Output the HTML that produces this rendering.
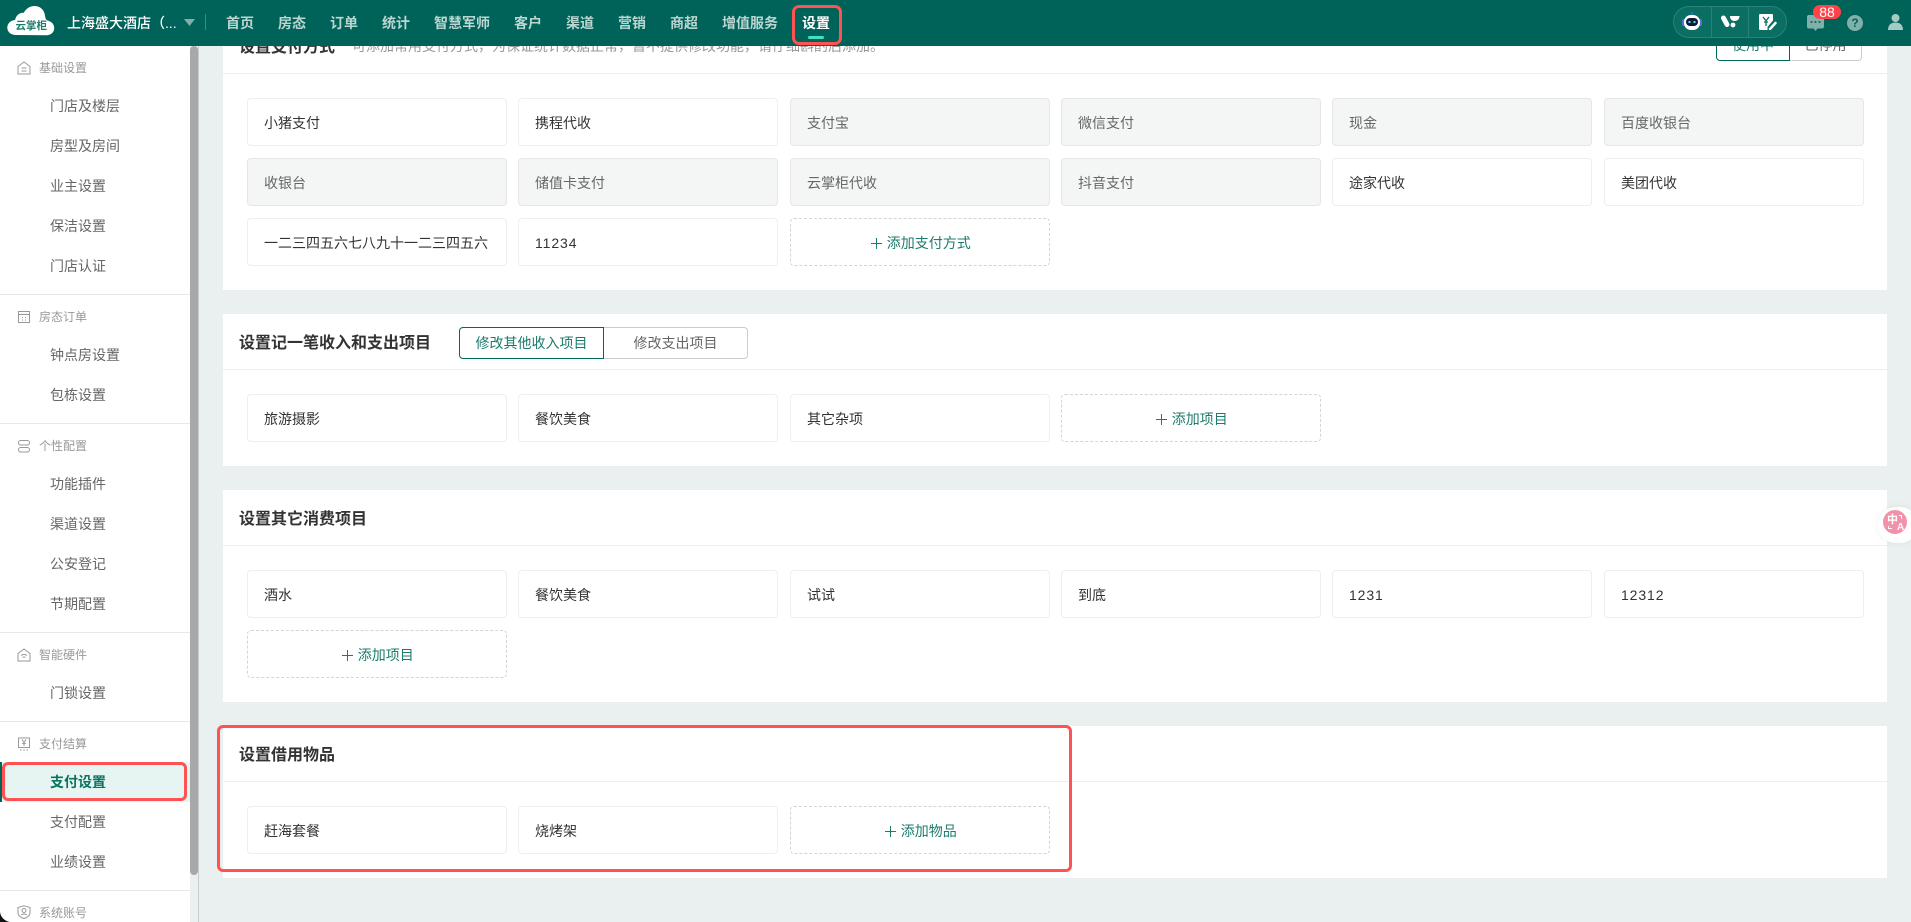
<!DOCTYPE html>
<html lang="zh-CN"><head><meta charset="utf-8"><title>设置</title>
<style>
*{box-sizing:border-box;margin:0;padding:0}
html,body{width:1911px;height:922px;overflow:hidden;background:#eaf0f0;font-family:"Liberation Sans","Noto Sans CJK SC",sans-serif;color:#333}
.a{position:absolute;white-space:nowrap}
#hd{left:0;top:0;width:1911px;height:46px;background:#00635a;z-index:5}
.n{top:12px;height:22px;line-height:22px;font-size:14px;font-weight:700;color:#bcd6d1}
.sb{left:0;top:46px;width:190px;height:876px;background:#fff}
.g{left:39px;font-size:12px;line-height:16px;color:#999;margin-top:1px}
.m{left:50px;font-size:14px;line-height:20px;color:#666}
.dv{left:0;width:190px;height:1px;background:#e8e8e8}
.ic{left:17px;width:14px;height:14px;fill:none;stroke:#999;stroke-width:1}
.c{left:223px;width:1664px;background:#fff}
.l{left:223px;width:1664px;height:1px;background:#eee}
.t{left:239px;font-size:16px;font-weight:700;line-height:24px;color:#333}
.i{width:259.5px;height:48px;border:1px solid #eee;border-radius:4px;background:#fff;font-size:14px;line-height:48px;padding-left:16px;color:#333}
.d{background:#f4f5f5;border-color:#e6e6e6;color:#666}
.ad{border:1px dashed #d4d4d4;color:#1c7b6c;text-align:center;padding:0 0 0 2px}
.ad b{display:inline-block;position:relative;width:11px;height:11px;margin-right:5px;vertical-align:-1px}
.ad b:before{content:"";position:absolute;left:0;top:5px;width:11px;height:1px;background:#1c7b6c}
.ad b:after{content:"";position:absolute;left:5px;top:0;width:1px;height:11px;background:#1c7b6c}
.tab{height:32px;font-size:14px;line-height:30px;text-align:center;color:#666;border:1px solid #ccc}
.on{border-color:#00695c;color:#1c7b6c;border-radius:4px 0 0 4px;background:#fff}
.off{border-left:none;border-radius:0 4px 4px 0;background:#fff}
.r{border:3px solid #ff5252;border-radius:6px;z-index:6;pointer-events:none}
</style></head><body>

<div class="a" style="left:0;top:0;width:1911px;height:922px;background:#eaf0f0"></div>

<!-- cards -->
<div class="a c" style="top:18px;height:272px"></div>
<div class="a l" style="top:73px"></div>
<div class="a t" style="top:36px">设置支付方式</div>
<div class="a" style="left:352px;top:36px;font-size:14px;line-height:20px;color:#999">可添加常用支付方式，为保证统计数据正常，暂不提供修改功能，请仔细斟酌后添加。</div>
<div class="a tab on" style="left:1716px;top:29px;width:74px">使用中</div>
<div class="a tab off" style="left:1790px;top:29px;width:72px">已停用</div>

<div class="a i" style="left:247px;top:98px">小猪支付</div>
<div class="a i" style="left:518px;top:98px">携程代收</div>
<div class="a i d" style="left:790px;top:98px">支付宝</div>
<div class="a i d" style="left:1061px;top:98px">微信支付</div>
<div class="a i d" style="left:1332px;top:98px">现金</div>
<div class="a i d" style="left:1604px;top:98px">百度收银台</div>
<div class="a i d" style="left:247px;top:158px">收银台</div>
<div class="a i d" style="left:518px;top:158px">储值卡支付</div>
<div class="a i d" style="left:790px;top:158px">云掌柜代收</div>
<div class="a i d" style="left:1061px;top:158px">抖音支付</div>
<div class="a i" style="left:1332px;top:158px">途家代收</div>
<div class="a i" style="left:1604px;top:158px">美团代收</div>
<div class="a i" style="left:247px;top:218px">一二三四五六七八九十一二三四五六</div>
<div class="a i" style="left:518px;top:218px;letter-spacing:.9px">11234</div>
<div class="a i ad" style="left:790px;top:218px"><b></b>添加支付方式</div>

<div class="a c" style="top:314px;height:152px"></div>
<div class="a l" style="top:369px"></div>
<div class="a t" style="top:332px">设置记一笔收入和支出项目</div>
<div class="a tab on" style="left:459px;top:327px;width:145px">修改其他收入项目</div>
<div class="a tab off" style="left:604px;top:327px;width:144px">修改支出项目</div>
<div class="a i" style="left:247px;top:394px">旅游摄影</div>
<div class="a i" style="left:518px;top:394px">餐饮美食</div>
<div class="a i" style="left:790px;top:394px">其它杂项</div>
<div class="a i ad" style="left:1061px;top:394px"><b></b>添加项目</div>

<div class="a c" style="top:490px;height:212px"></div>
<div class="a l" style="top:545px"></div>
<div class="a t" style="top:508px">设置其它消费项目</div>
<div class="a i" style="left:247px;top:570px">酒水</div>
<div class="a i" style="left:518px;top:570px">餐饮美食</div>
<div class="a i" style="left:790px;top:570px">试试</div>
<div class="a i" style="left:1061px;top:570px">到底</div>
<div class="a i" style="left:1332px;top:570px;letter-spacing:.9px">1231</div>
<div class="a i" style="left:1604px;top:570px;letter-spacing:.9px">12312</div>
<div class="a i ad" style="left:247px;top:630px"><b></b>添加项目</div>

<div class="a c" style="top:726px;height:152px"></div>
<div class="a l" style="top:781px"></div>
<div class="a t" style="top:744px">设置借用物品</div>
<div class="a i" style="left:247px;top:806px">赶海套餐</div>
<div class="a i" style="left:518px;top:806px">烧烤架</div>
<div class="a i ad" style="left:790px;top:806px"><b></b>添加物品</div>
<div class="a r" style="left:217px;top:725px;width:855px;height:147px"></div>

<!-- translate widget -->
<div class="a" style="left:1878px;top:507px;width:40px;height:36px;border-radius:18px;background:#fff;box-shadow:0 0 8px rgba(0,0,0,.06)"></div>
<div class="a" style="left:1883px;top:510px;width:24px;height:24px;border-radius:50%;background:#f292aa;color:#fff;font-size:11px;line-height:12px;font-weight:700"><span class="a" style="left:4px;top:4px">中</span><span class="a" style="left:14px;top:12px;font-size:10px">A</span><svg class="a" style="left:0;top:0" width="24" height="24" viewBox="0 0 24 24" fill="none" stroke="#fff" stroke-width="1"><path d="M16 5.500h2.500V9M5.500 16v2.500H9"/></svg></div>

<!-- sidebar -->
<div class="a sb"></div>
<div class="a" style="left:198px;top:46px;width:1px;height:876px;background:#c9cccc"></div>
<div class="a" style="left:190px;top:46px;width:8px;height:829px;background:#a8a8a8;border-radius:4px"></div>

<svg class="a ic" style="top:61px" viewBox="0 0 14 14"><path d="M1 5.500 7 1l6 4.500V13H1zM4.500 7h5M4.500 10h5"/></svg>
<div class="a g" style="top:59px">基础设置</div>
<div class="a m" style="top:96px">门店及楼层</div>
<div class="a m" style="top:136px">房型及房间</div>
<div class="a m" style="top:176px">业主设置</div>
<div class="a m" style="top:216px">保洁设置</div>
<div class="a m" style="top:256px">门店认证</div>
<div class="a dv" style="top:294px"></div>

<svg class="a ic" style="top:310px" viewBox="0 0 14 14"><path d="M1.500 1.500h11v11h-11zM1.500 4.500h11M5 7.500h1M8 7.500h1M5 10h1M8 10h1"/></svg>
<div class="a g" style="top:308px">房态订单</div>
<div class="a m" style="top:345px">钟点房设置</div>
<div class="a m" style="top:385px">包栋设置</div>
<div class="a dv" style="top:423px"></div>

<svg class="a ic" style="top:439px" viewBox="0 0 14 14"><rect x="1.500" y="1.500" width="11" height="4.500" rx="2.200"/><rect x="1.500" y="8.500" width="11" height="4.500" rx="2.200"/></svg>
<div class="a g" style="top:437px">个性配置</div>
<div class="a m" style="top:474px">功能插件</div>
<div class="a m" style="top:514px">渠道设置</div>
<div class="a m" style="top:554px">公安登记</div>
<div class="a m" style="top:594px">节期配置</div>
<div class="a dv" style="top:632px"></div>

<svg class="a ic" style="top:648px" viewBox="0 0 14 14"><path d="M1 5.500 7 1l6 4.500V13H1zM4 7.500c2-1.500 4-1.500 6 0M5.500 9.500c1-.7 2-.7 3 0"/></svg>
<div class="a g" style="top:646px">智能硬件</div>
<div class="a m" style="top:683px">门锁设置</div>
<div class="a dv" style="top:721px"></div>

<svg class="a ic" style="top:737px" viewBox="0 0 14 14"><path d="M1.500 1h11v9.500h-11zM3 13h1.500M6.300 13h1.500M9.500 13H11M5 2.500 7 5.500l2-3M7 5.500V9M5.200 6.500h3.600"/></svg>
<div class="a g" style="top:735px">支付结算</div>
<div class="a" style="left:0;top:762px;width:190px;height:40px;background:#e6f5f1"></div>
<div class="a" style="left:0;top:762px;width:2px;height:40px;background:#00635a"></div>
<div class="a m" style="top:772px;color:#0b7261;font-weight:700">支付设置</div>
<div class="a r" style="left:2px;top:762px;width:185px;height:39px"></div>
<div class="a m" style="top:812px">支付配置</div>
<div class="a m" style="top:852px">业绩设置</div>
<div class="a dv" style="top:890px"></div>

<svg class="a ic" style="top:905px" viewBox="0 0 14 14"><path d="M7 .8 13 2.500V8c0 2.800-3 4.500-6 5.500C4 12.500 1 10.800 1 8V2.500z"/><circle cx="7" cy="5.500" r="2"/><path d="M4 10c1.800-1.200 4.200-1.200 6 0"/></svg>
<div class="a g" style="top:904px">系统账号</div>

<!-- window corner -->
<svg class="a" style="left:0;top:912px;z-index:7" width="10" height="10" viewBox="0 0 10 10"><path d="M0 0C.5 5 5 9.500 10 10H0z" fill="#111"/></svg>

<!-- header -->
<div class="a" id="hd">
  <svg class="a" style="left:7px;top:6px" width="48" height="30" viewBox="0 0 49 31"><path d="M9 30C3.500 30 0 26.500 0 22.500 0 18 3.500 15 8 14.500 9 9.500 13 6.500 17 7 19.500 2.500 23.500 0 28 0 34 0 38.500 4 39 10.500 39.500 13 40 14.500 41.500 15 46 16 48.500 19 48.500 23 48.500 27 45 30 41 30.200z" fill="#fff"/></svg>
  <div class="a" style="left:15.500px;top:19px;width:32px;font-size:10.500px;line-height:15px;font-weight:700;color:#1c7b6c">云掌柜</div>
  <div class="a" style="left:67px;top:12px;font-size:14px;line-height:22px;color:#fff;font-weight:500">上海盛大酒店（...</div>
  <svg class="a" style="left:184px;top:19px" width="11" height="7"><path d="M0 0h11L5.500 7z" fill="#7fb0a9"/></svg>
  <div class="a" style="left:205px;top:14px;width:1px;height:16px;background:#3d8a80"></div>
  <div class="a n" style="left:226px">首页</div>
  <div class="a n" style="left:278px">房态</div>
  <div class="a n" style="left:330px">订单</div>
  <div class="a n" style="left:382px">统计</div>
  <div class="a n" style="left:434px">智慧军师</div>
  <div class="a n" style="left:514px">客户</div>
  <div class="a n" style="left:566px">渠道</div>
  <div class="a n" style="left:618px">营销</div>
  <div class="a n" style="left:670px">商超</div>
  <div class="a n" style="left:722px">增值服务</div>
  <div class="a n" style="left:802px;color:#fff">设置</div>
  <div class="a" style="left:808px;top:36px;width:16px;height:3px;border-radius:2px;background:#3fe0c5"></div>
  <div class="a r" style="left:792px;top:5px;width:50px;height:40px;border-radius:7px"></div>

  <div class="a" style="left:1673px;top:6px;width:114px;height:32px;border-radius:16px;background:#0a6e62;border:1px solid #2a8276"></div>
  <div class="a" style="left:1711px;top:7px;width:1px;height:30px;background:#2a8276"></div>
  <div class="a" style="left:1748px;top:7px;width:1px;height:30px;background:#2a8276"></div>
  <svg class="a" style="left:1682px;top:12px" width="20" height="20" viewBox="0 0 20 20"><path d="M10 0v4" stroke="#5b6fe0" stroke-width="1"/><rect x="0" y="7" width="20" height="7" rx="2" fill="#5b6fe0"/><rect x="2" y="3" width="16" height="15" rx="7" fill="#fff"/><rect x="4" y="6" width="12" height="8" rx="4" fill="#0c1b3a"/><rect x="6.500" y="9" width="2" height="2" fill="#4fe0e0"/><rect x="11.500" y="9" width="2" height="2" fill="#4fe0e0"/></svg>
  <svg class="a" style="left:1721px;top:14px" width="19" height="14" viewBox="0 0 19 14"><path d="M2.500 4 6 10.500" stroke="#fff" stroke-width="5" stroke-linecap="round"/><path d="M9 2h9.500c0 3-2 5-5 5S9 5 9 2z" fill="#fff"/><circle cx="12" cy="11" r="2.400" fill="#fff"/></svg>
  <svg class="a" style="left:1759px;top:14px" width="18" height="16" viewBox="0 0 18 16"><path d="M1 0h12a1 1 0 0 1 1 1v5.500L8.500 13v3H1a1 1 0 0 1-1-1V1a1 1 0 0 1 1-1z" fill="#fff"/><path d="M4 3l3 3.800 3-3.800M7 6.800V12M5 8h4" stroke="#0a6e62" stroke-width="1.300" fill="none"/><path d="M11 15l5.500-6" stroke="#fff" stroke-width="2.500" stroke-linecap="round"/></svg>

  <svg class="a" style="left:1807px;top:15px" width="17" height="16" viewBox="0 0 17 16"><path d="M2 0h13a2 2 0 0 1 2 2v9.500a2 2 0 0 1-2 2h-4.500L8.500 16l-2-2.500H2a2 2 0 0 1-2-2V2a2 2 0 0 1 2-2z" fill="#7fb0a9"/><circle cx="4.500" cy="7" r="1" fill="#00635a"/><circle cx="8.500" cy="7" r="1" fill="#00635a"/><circle cx="12.500" cy="7" r="1" fill="#00635a"/></svg>
  <div class="a" style="left:1813px;top:5px;width:28px;height:14px;border-radius:7px;background:#ff4348;color:#fff;font-size:14px;line-height:14px;text-align:center">88</div>
  <div class="a" style="left:1847px;top:15px;width:16px;height:16px;border-radius:50%;background:#7fb0a9;color:#00635a;font-size:12px;line-height:16px;text-align:center;font-weight:700">?</div>
  <svg class="a" style="left:1888px;top:14px" width="15" height="16" viewBox="0 0 15 16"><circle cx="7.500" cy="4" r="4" fill="#a6cac4"/><path d="M0 16c0-5 3-7.500 7.500-7.500S15 11 15 16z" fill="#a6cac4"/></svg>
</div>
</body></html>
